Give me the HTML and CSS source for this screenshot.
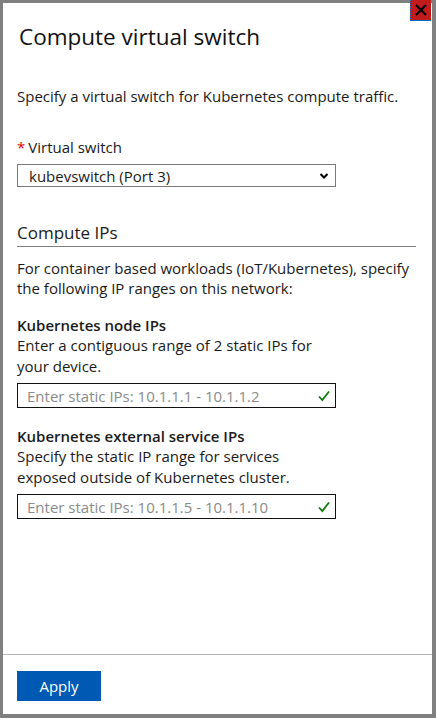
FILE: index.html
```html
<!DOCTYPE html>
<html>
<head>
<meta charset="utf-8">
<link rel="stylesheet" href="styles.css">
</head>
<body>
<div class="frame">
  <button class="close" aria-label="Close">
    <svg width="14" height="14" viewBox="0 0 14 14"><path d="M2 2 L12 12 M12 2 L2 12" stroke="#000" stroke-width="2.2" fill="none"/></svg>
  </button>
  <div class="content">
    <h1 class="title">Compute virtual switch</h1>
    <p class="intro">Specify a virtual switch for Kubernetes compute traffic.</p>
    <label class="field-label"><span class="req">*</span>Virtual switch</label>
    <div class="select">
      <span>kubevswitch (Port 3)</span>
      <svg width="10" height="8" viewBox="0 0 10 8"><path d="M1.5 2 L5 5.5 L8.5 2" stroke="#000" stroke-width="2" fill="none"/></svg>
    </div>
    <h2 class="section">Compute IPs</h2>
    <p class="desc">For container based workloads (IoT/Kubernetes), specify the following IP ranges on this network:</p>
    <div class="group">
      <div class="group-title">Kubernetes node IPs</div>
      <div class="group-help">Enter a contiguous range of 2 static IPs for your device.</div>
      <div class="input">
        <span class="ph">Enter static IPs: 10.1.1.1 - 10.1.1.2</span>
        <svg width="12" height="12" viewBox="0 0 12 12"><path d="M1 6.5 L4.3 10 L11 1.5" stroke="#107c10" stroke-width="1.8" fill="none"/></svg>
      </div>
    </div>
    <div class="group">
      <div class="group-title">Kubernetes external service IPs</div>
      <div class="group-help">Specify the static IP range for services exposed outside of Kubernetes cluster.</div>
      <div class="input">
        <span class="ph">Enter static IPs: 10.1.1.5 - 10.1.1.10</span>
        <svg width="12" height="12" viewBox="0 0 12 12"><path d="M1 6.5 L4.3 10 L11 1.5" stroke="#107c10" stroke-width="1.8" fill="none"/></svg>
      </div>
    </div>
  </div>
  <div class="footer">
    <button class="apply">Apply</button>
  </div>
</div>
</body>
</html>
```
FILE: styles.css
```css
html, body {
  margin: 0;
  padding: 0;
  width: 436px;
  height: 718px;
  background: #fff;
}
body {
  font-family: "Open Sans", "Noto Sans", sans-serif;
  color: #1b1b1b;
}
.frame {
  position: relative;
  box-sizing: border-box;
  width: 436px;
  height: 718px;
  border: 3px solid #808080;
  border-right-width: 4px;
  border-bottom-width: 4px;
  display: flex;
  flex-direction: column;
}
.close {
  position: absolute;
  top: -3px;
  right: 1px;
  width: 21px;
  height: 21px;
  padding: 0;
  margin: 0;
  border: none;
  border-left: 1px dotted #0078d4;
  border-bottom: 1px dotted #0078d4;
  background: #c11b1b;
  display: flex;
  align-items: center;
  justify-content: center;
}
.content {
  flex: 1;
  padding: 0 16px 0 14px;
}
.title {
  margin: 19px 0 0 2px;
  font-size: 22.5px;
  font-weight: 400;
  line-height: 30px;
  color: #111;
}
.intro {
  margin: 34px 0 0;
  font-size: 15px;
  line-height: 20px;
}
.field-label {
  display: block;
  margin-top: 31px;
  font-size: 15px;
  line-height: 20px;
}
.req {
  color: #d00;
  margin-right: 3px;
}
.select {
  margin-top: 7px;
  width: 319px;
  height: 23px;
  box-sizing: border-box;
  border: 1px solid #7a7a7a;
  display: flex;
  align-items: center;
  justify-content: space-between;
  padding: 0 6px 0 11px;
  font-size: 15px;
}
.section {
  margin: 35px 0 0;
  font-size: 17px;
  font-weight: 400;
  line-height: 22px;
  padding-bottom: 2px;
  border-bottom: 1px solid #7f7f7f;
}
.desc {
  margin: 11px 0 0;
  font-size: 15px;
  line-height: 20px;
}
.group {
  margin-top: 17px;
  width: 319px;
}
.group + .group {
  margin-top: 18px;
}
.group-title {
  font-size: 15px;
  font-weight: 600;
  line-height: 20px;
}
.group-help {
  font-size: 15px;
  line-height: 21px;
}
.input {
  margin-top: 6px;
  width: 319px;
  height: 25px;
  box-sizing: border-box;
  border: 1px solid #111;
  display: flex;
  align-items: center;
  justify-content: space-between;
  padding: 0 5px 0 9px;
  font-size: 15px;
}
.ph {
  color: #8a8a8a;
}
.footer {
  border-top: 1px solid #b3b3b3;
  height: 60px;
  padding: 16px 14px 0;
  box-sizing: border-box;
}
.apply {
  width: 84px;
  height: 30px;
  border: none;
  background: #0059b3;
  color: #fff;
  font-family: "Open Sans", sans-serif;
  font-size: 15px;
  padding: 0;
}
```
